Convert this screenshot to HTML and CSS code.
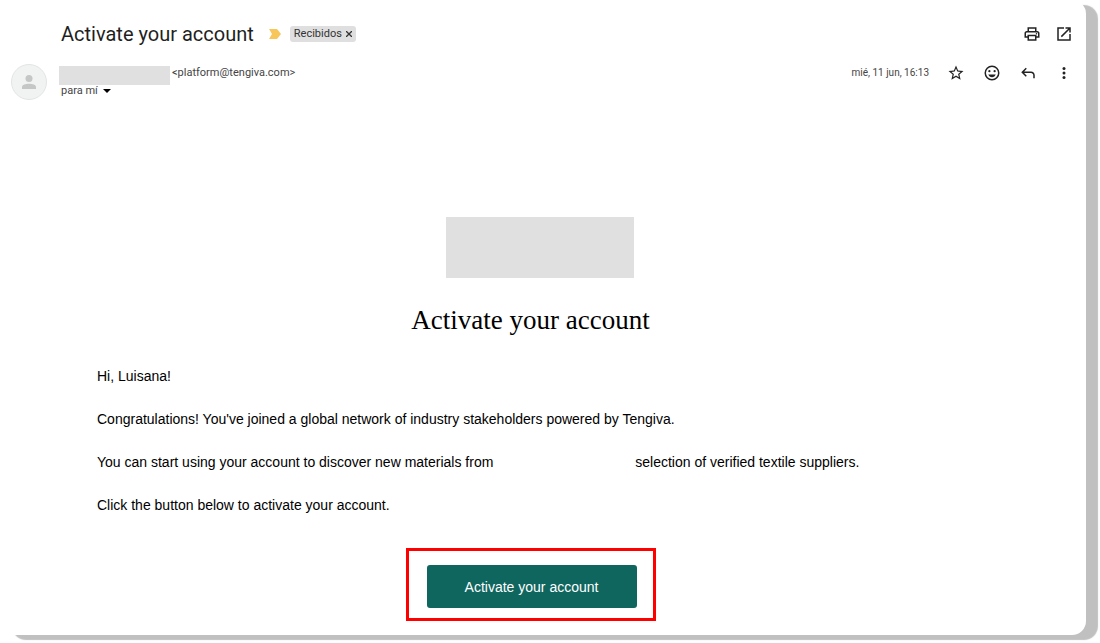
FILE: index.html
```html
<!DOCTYPE html>
<html lang="es">
<head>
  <meta charset="UTF-8">
  <title>Activate your account</title>
  <link rel="stylesheet" href="styles.css">
</head>
<body>
  <main class="card">
    <header class="subject">
      <h1>Activate your account</h1>
      <svg class="important" viewBox="0 0 12 10"><path d="M0 0h8l4 5-4 5H0l3-5z" fill="#f7c75c"/></svg>
      <span class="label">Recibidos <button type="button" class="remove" aria-label="Quitar etiqueta"><svg viewBox="0 0 6 6"><path d="M0 0l6 6M6 0L0 6" stroke="#333" stroke-width="1.3"/></svg></button></span>
      <div class="tools">
        <button type="button" class="icon" aria-label="Imprimir"><svg viewBox="0 0 24 24"><path d="M19 8h-1V3H6v5H5c-1.660 0-3 1.340-3 3v6h4v4h12v-4h4v-6c0-1.660-1.340-3-3-3zM8 5h8v3H8V5zm8 14H8v-4h8v4zm2-4v-2H6v2H4v-4c0-.55.45-1 1-1h14c.55 0 1 .45 1 1v4h-2z"/><circle cx="18" cy="11.500" r="1"/></svg></button>
        <button type="button" class="icon" aria-label="Abrir en ventana nueva"><svg viewBox="0 0 24 24"><path d="M19 19H5V5h7V3H3v18h18v-9h-2v7zM14 3v2h3.590l-9.830 9.830 1.410 1.410L19 6.410V10h2V3h-7z"/></svg></button>
      </div>
    </header>

    <section class="sender">
      <div class="avatar"><svg viewBox="0 0 16 16"><circle cx="8" cy="4" r="4"/><path d="M0 16v-2c0-3 4-4 8-4s8 1 8 4v2z"/></svg></div>
      <div class="from">
        <div class="address"><span class="name"></span><span>&lt;platform@tengiva.com&gt;</span></div>
        <button type="button" class="to">para mí <svg viewBox="0 0 8 4"><path d="M0 0h8L4 4z"/></svg></button>
      </div>
      <time>mié, 11 jun, 16:13</time>
      <div class="actions">
        <button type="button" class="icon" aria-label="Destacar"><svg viewBox="0 0 24 24"><path d="M22 9.240l-7.190-.62L12 2 9.190 8.630 2 9.240l5.460 4.730L5.820 21 12 17.270 18.180 21l-1.630-7.030L22 9.240zM12 15.400l-3.760 2.270 1-4.280-3.320-2.880 4.380-.38L12 6.100l1.710 4.040 4.380.38-3.320 2.880 1 4.280L12 15.400z"/></svg></button>
        <button type="button" class="icon" aria-label="Reaccionar"><svg viewBox="0 0 24 24"><path d="M12 2a10 10 0 1 0 0 20 10 10 0 0 0 0-20zm0 18a8 8 0 1 1 0-16 8 8 0 0 1 0 16z"/><circle cx="8.500" cy="9.500" r="1.500"/><circle cx="15.500" cy="9.500" r="1.500"/><path d="M7 14h10c-.8 2.200-2.700 3.600-5 3.600S7.800 16.200 7 14z"/></svg></button>
        <button type="button" class="icon" aria-label="Responder"><svg viewBox="0 0 24 24"><path d="M19 19v-4c0-1.660-1.340-3-3-3H6.830l3.580 3.590L9 17l-6-6 6-6 1.410 1.410L6.830 10H16c2.760 0 5 2.240 5 5v4h-2z"/></svg></button>
        <button type="button" class="icon" aria-label="Más"><svg viewBox="0 0 24 24"><circle cx="12" cy="6" r="2"/><circle cx="12" cy="12" r="2"/><circle cx="12" cy="18" r="2"/></svg></button>
      </div>
    </section>

    <article class="message">
      <div class="banner"><div class="logo"></div></div>
      <h2>Activate your account</h2>
      <p>Hi, Luisana!</p>
      <p>Congratulations! You've joined a global network of industry stakeholders powered by Tengiva.</p>
      <p>You can start using your account to discover new materials from <span class="blank"></span>selection of verified textile suppliers.</p>
      <p>Click the button below to activate your account.</p>
      <div class="highlight">
        <button type="button" class="activate">Activate your account</button>
      </div>
    </article>
  </main>
</body>
</html>
```
FILE: styles.css
```css
* {
  box-sizing: border-box;
}
body {
  margin: 0;
  background: #fff;
  color: #000;
  font-family: Roboto, sans-serif;
}
button {
  border: 0;
  padding: 0;
  background: none;
  color: inherit;
  font: inherit;
}
svg {
  display: block;
  flex: none;
}

.card {
  margin: 0 14px 8px 0;
  padding-bottom: 14px;
  border-radius: 14px;
  background: #fff;
  box-shadow: 12px 5px 1px #c0c0c0;
}

/* subject line */
.subject {
  display: flex;
  align-items: center;
  height: 67px;
  padding: 0 6px 0 61px;
}
h1 {
  margin: 0;
  font-size: 20px;
  font-weight: 400;
  color: #1f1f1f;
}
.important {
  width: 12px;
  height: 10px;
  margin: 0 9px 0 15px;
}
.label {
  display: flex;
  align-items: center;
  gap: 4px;
  height: 16px;
  padding: 0 4px;
  border-radius: 3px;
  background: #dfdfdf;
  font-size: 11px;
  color: #333;
}
.remove svg {
  width: 6px;
  height: 6px;
}
.tools, .actions {
  display: flex;
}
.tools {
  margin-left: auto;
}
.icon {
  display: flex;
  align-items: center;
  justify-content: center;
  width: 32px;
  height: 32px;
}
.icon svg {
  width: 18px;
  height: 18px;
  fill: #222;
}
.actions .icon {
  width: 36px;
}

/* sender row */
.sender {
  display: flex;
  align-items: flex-start;
  padding: 0 4px 0 11px;
  font-size: 11px;
  color: #444;
}
.avatar {
  display: flex;
  align-items: center;
  justify-content: center;
  width: 36px;
  height: 36px;
  margin: -3px 12px 0 0;
  border: 1px solid #e3e5e5;
  border-radius: 50%;
  background: #f1f3f3;
}
.avatar svg {
  width: 14px;
  height: 16px;
  fill: #c4c7c5;
}
.from {
  flex: 1;
}
.address {
  display: flex;
  gap: 2px;
  height: 18px;
  line-height: 12px;
}
.name {
  width: 111px;
  height: 19px;
  margin-top: -1px;
  background: #e0e0e0;
}
.to {
  display: flex;
  align-items: center;
  gap: 5px;
  padding-left: 2px;
  line-height: 12px;
}
.to svg {
  width: 8px;
  height: 4px;
}
time {
  margin-right: 9px;
  font-size: 10px;
  line-height: 12px;
}
.actions {
  margin-top: -10px;
}

/* mail body */
.message {
  padding: 117px 122px 0 97px;
  font-family: "Liberation Sans", Arial, sans-serif;
}
.banner {
  display: flex;
  justify-content: center;
  padding-left: 18px;
}
.logo {
  width: 188px;
  height: 61px;
  background: #e0e0e0;
}
h2 {
  margin: 26px 0 31px;
  font: 400 27px/32px "Liberation Serif", "Times New Roman", serif;
  text-align: center;
}
p {
  margin: 0 0 25px;
  font-size: 14px;
  line-height: 18px;
}
.blank {
  display: inline-block;
  width: 138px;
}
.highlight {
  display: flex;
  justify-content: center;
  width: 250px;
  margin: 34px auto 0;
  padding: 14px 16px 10px 18px;
  border: 3px solid #f00;
}
.activate {
  width: 210px;
  height: 43px;
  border-radius: 3px;
  background: #0f665e;
  color: #fff;
  font-size: 14px;
}
```
